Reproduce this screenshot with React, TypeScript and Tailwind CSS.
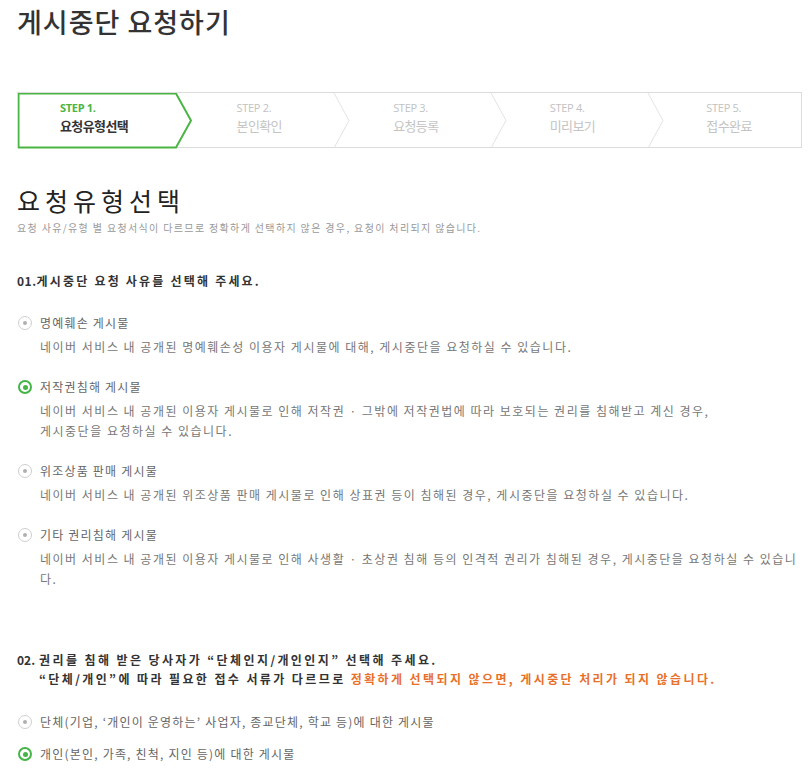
const KR = "font-['Noto_Sans_CJK_KR',sans-serif]";

const steps = [
  { n: "STEP 1.", label: "요청유형선택", active: true },
  { n: "STEP 2.", label: "본인확인" },
  { n: "STEP 3.", label: "요청등록" },
  { n: "STEP 4.", label: "미리보기" },
  { n: "STEP 5.", label: "접수완료" },
];

function Radio({ checked }: { checked?: boolean }) {
  return checked ? (
    <span className="w-[14px] h-[14px] rounded-full border-2 border-[#44b544] flex items-center justify-center shrink-0">
      <span className="w-[5px] h-[5px] rounded-full bg-[#44b544]" />
    </span>
  ) : (
    <span className="w-[14px] h-[14px] rounded-full border border-[#cfcfcf] flex items-center justify-center shrink-0">
      <span className="w-[4px] h-[4px] rounded-full bg-[#b0b0b0]" />
    </span>
  );
}

function Option({ checked, label, children }: { checked?: boolean; label: string; children?: React.ReactNode }) {
  return (
    <div>
      <div className="flex items-center gap-[8px] h-[20px]">
        <Radio checked={checked} />
        <span className="text-[12px] leading-[20px] tracking-[1.2px] text-[#666] whitespace-nowrap">{label}</span>
      </div>
      {children && (
        <p className="mt-[4px] ml-[22px] text-[12px] leading-[20px] tracking-[1.5px] text-[#777] whitespace-nowrap">
          {children}
        </p>
      )}
    </div>
  );
}

function StepBar() {
  return (
    <div className="relative mt-[55px] mr-[7px] h-[56px] border border-[#dcdcdc] flex">
      <svg className="absolute inset-0 pointer-events-none" width="785" height="56" viewBox="0 0 785 56">
        {[316, 473, 630].map((x) => (
          <polyline key={x} points={`${x},0 ${x + 15},27.5 ${x},55`} fill="none" stroke="#e3e3e3" strokeWidth="1" />
        ))}
        <path d="M0.5,0.5 H158 L173,27.5 L158,54.5 H0.5 Z" fill="none" stroke="#4bb543" strokeWidth="2" />
      </svg>
      {steps.map((s, i) => (
        <div key={s.n} className={`w-[157px] pt-[8px] ${i === 0 ? "pl-[42px]" : "pl-[62px]"}`}>
          <div
            className={`font-['Open_Sans',sans-serif] text-[11px] leading-[14px] tracking-[-0.3px] ${
              s.active ? "font-bold text-[#4bb543]" : "text-[#c2c2c2]"
            }`}
          >
            {s.n}
          </div>
          <div
            className={`mt-[2px] text-[13px] leading-[18px] tracking-[-0.6px] ${
              s.active ? "font-bold text-[#333]" : "text-[#c4c4c4]"
            }`}
          >
            {s.label}
          </div>
        </div>
      ))}
    </div>
  );
}

export default function App() {
  return (
    <div className={`${KR} bg-white min-h-[775px] pl-[17px] pt-[7px]`}>
      <h1 className="text-[27px] leading-[30px] text-[#333] font-medium tracking-[1px]">게시중단 요청하기</h1>

      <StepBar />

      <h2 className="mt-[37px] text-[25px] leading-[30px] tracking-[5px] text-[#222]">요청유형선택</h2>
      <p className="mt-[5px] text-[10px] leading-[16px] tracking-[1.35px] text-[#999] whitespace-nowrap">
        요청 사유/유형 별 요청서식이 다르므로 정확하게 선택하지 않은 경우, 요청이 처리되지 않습니다.
      </p>

      <h3 className="mt-[35px] text-[12px] leading-[20px] font-bold tracking-[2.2px] text-[#333] whitespace-nowrap">
        <span className="tracking-[0.5px]">01.</span>게시중단 요청 사유를 선택해 주세요.
      </h3>

      <div className="mt-[22px] ml-[1px] flex flex-col gap-[20px]">
        <Option label="명예훼손 게시물">
          네이버 서비스 내 공개된 명예훼손성 이용자 게시물에 대해, 게시중단을 요청하실 수 있습니다.
        </Option>
        <Option checked label="저작권침해 게시물">
          네이버 서비스 내 공개된 이용자 게시물로 인해 저작권 · 그밖에 저작권법에 따라 보호되는 권리를 침해받고 계신 경우,
          <br />
          게시중단을 요청하실 수 있습니다.
        </Option>
        <Option label="위조상품 판매 게시물">
          네이버 서비스 내 공개된 위조상품 판매 게시물로 인해 상표권 등이 침해된 경우, 게시중단을 요청하실 수 있습니다.
        </Option>
        <Option label="기타 권리침해 게시물">
          네이버 서비스 내 공개된 이용자 게시물로 인해 사생활 · 초상권 침해 등의 인격적 권리가 침해된 경우, 게시중단을 요청하실 수 있습니
          <br />
          다.
        </Option>
      </div>

      <div className="mt-[61px] flex text-[12px] leading-[19px] font-bold tracking-[2.4px] text-[#333]">
        <span className="w-[22px] shrink-0 tracking-normal">02.</span>
        <div className="whitespace-nowrap">
          권리를 침해 받은 당사자가 “단체인지/개인인지” 선택해 주세요.
          <br />
          “단체/개인”에 따라 필요한 접수 서류가 다르므로{" "}
          <span className="text-[#e8702a]">정확하게 선택되지 않으면, 게시중단 처리가 되지 않습니다.</span>
        </div>
      </div>

      <div className="mt-[24px] ml-[1px] flex flex-col gap-[12px]">
        <Option label="단체(기업, ‘개인이 운영하는’ 사업자, 종교단체, 학교 등)에 대한 게시물" />
        <Option checked label="개인(본인, 가족, 친척, 지인 등)에 대한 게시물" />
      </div>
    </div>
  );
}
